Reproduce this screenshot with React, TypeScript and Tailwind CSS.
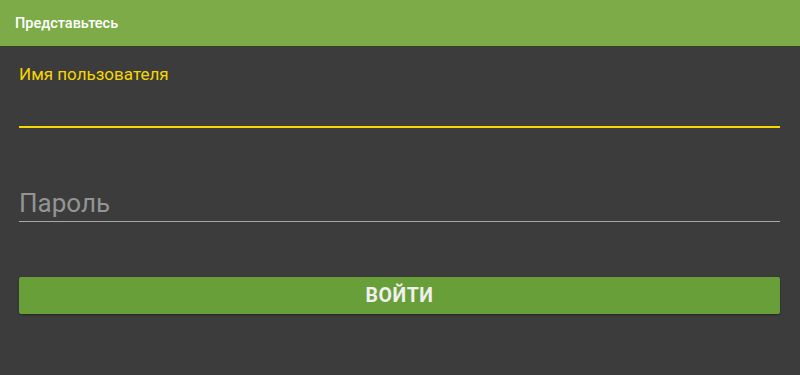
import React from "react";

export default function App() {
  return (
    <div className="w-[800px] h-[375px] bg-[#3c3c3c] overflow-hidden" style={{ fontFamily: "Roboto, 'Noto Sans', sans-serif" }}>
      <div className="h-[47px] bg-[#7cab48] flex items-center px-[15px] pt-px border-b border-[#33402a]">
        <span className="text-white text-[14.5px] font-medium">Представьтесь</span>
      </div>
      <div className="px-[19px] pr-[20px]">
        <div className="pt-[15px]">
          <div className="text-[#f6d700] text-[17px] leading-[24px]">Имя пользователя</div>
          <div className="h-[40px]"></div>
          <div className="h-[2px] bg-[#f6d700]"></div>
        </div>
        <div className="pt-[59px]">
          <div className="text-[#949494] text-[26px] leading-[32px]">Пароль</div>
          <div className="h-[2px]"></div>
          <div className="h-px bg-[#a8a8a8]"></div>
        </div>
        <div className="pt-[55px]">
          <button className="w-full h-[37px] bg-[#689f38] rounded-[2px] text-[#f0f0f0] text-[19.5px] font-bold tracking-[0.5px] flex items-center justify-center shadow-[0_1px_2px_rgba(0,0,0,0.4)]">
            ВОЙТИ
          </button>
        </div>
      </div>
    </div>
  );
}
